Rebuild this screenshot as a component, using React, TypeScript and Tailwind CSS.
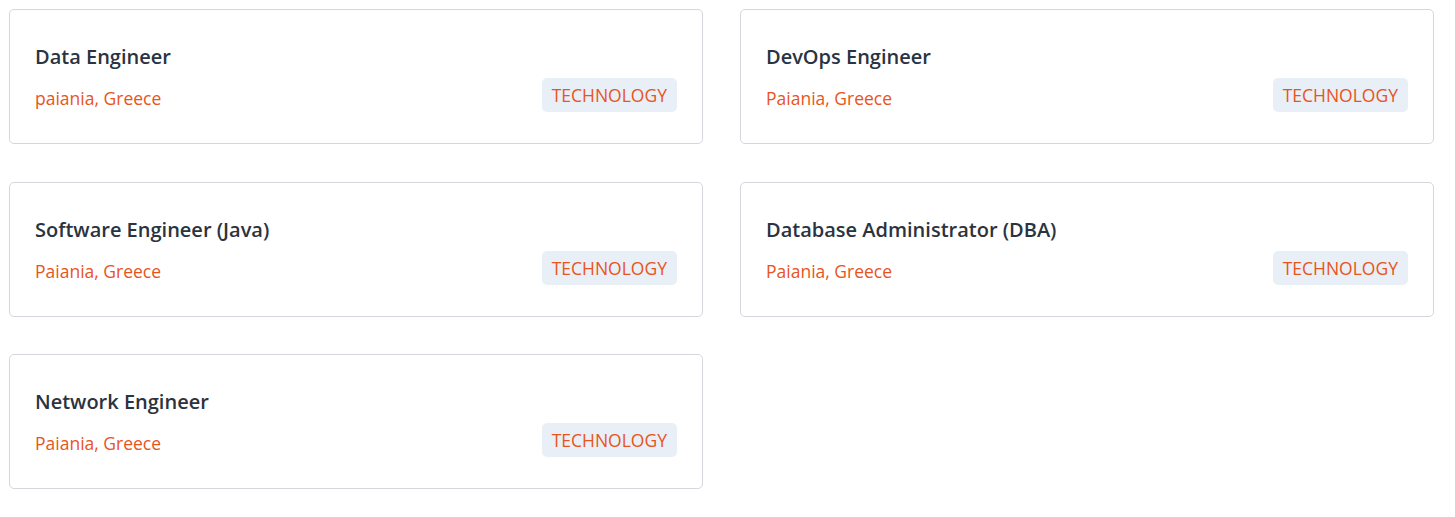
const jobs = [
  { title: "Data Engineer", location: "paiania, Greece" },
  { title: "DevOps Engineer", location: "Paiania, Greece" },
  { title: "Software Engineer (Java)", location: "Paiania, Greece" },
  { title: "Database Administrator (DBA)", location: "Paiania, Greece" },
  { title: "Network Engineer", location: "Paiania, Greece" },
];

function JobCard({ title, location }: { title: string; location: string }) {
  return (
    <div className="flex h-[135px] items-end justify-between rounded-[5px] border border-[#d5d7dc] bg-white pl-[25px] pr-[25px] pb-[31px]">
      <div className="flex flex-col">
        <h3 className="text-[20px] leading-[28px] font-semibold text-[#2b3340]">{title}</h3>
        <p className="mt-[14px] text-[17.5px] leading-[27px] text-[#e8541c]">{location}</p>
      </div>
      <span className="rounded-[5px] bg-[#e8eff6] px-[10px] text-[17.5px] leading-[34px] text-[#e8541c]">
        TECHNOLOGY
      </span>
    </div>
  );
}

export default function App() {
  return (
    <div className="min-h-screen bg-white p-[9px] font-['Open_Sans',sans-serif]">
      <div className="grid w-[1425px] grid-cols-2 gap-x-[37px] gap-y-[37.5px]">
        {jobs.map((job) => (
          <JobCard key={job.title} {...job} />
        ))}
      </div>
    </div>
  );
}
